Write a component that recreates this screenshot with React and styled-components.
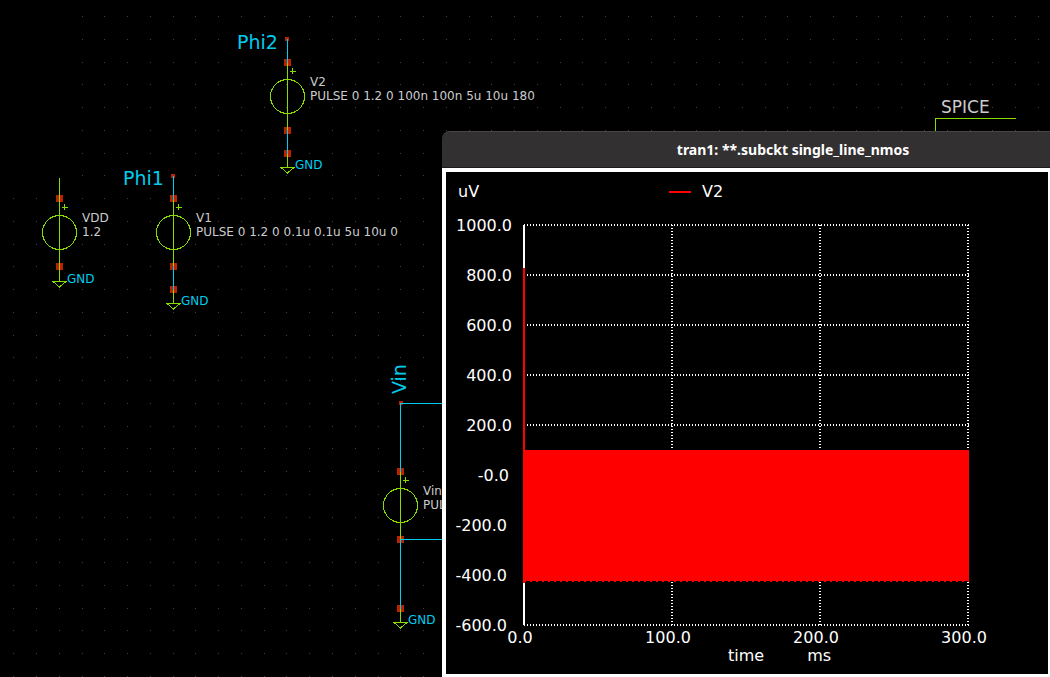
import React from "react";
import styled, { createGlobalStyle } from "styled-components";

const GlobalStyle = createGlobalStyle`
  body {
    margin: 0;
    background: #000;
    font-family: "DejaVu Sans", sans-serif;
  }
`;

const GREEN = "#88dd00";
const CYAN = "#00ccee";
const RED = "#bb2200";

const Desktop = styled.main`
  position: relative;
  min-height: 100vh;
  background: #000;
  overflow: hidden;
`;

const Schematic = styled.svg`
  position: absolute;
  inset: 0;
  width: 100%;
  height: 100%;
  shape-rendering: crispEdges;
`;

const Wire = styled.path`
  fill: none;
  stroke: ${(p) => p.$color};
  stroke-width: 1px;
`;

const Outline = styled.circle`
  fill: none;
  stroke: ${GREEN};
  stroke-width: 1px;
`;

const Label = styled.text`
  fill: ${(p) => p.$color || "#cccccc"};
  font-size: ${(p) => p.$size || 12}px;
`;

const PlotWindow = styled.section`
  position: absolute;
  top: 131px;
  left: 442px;
  right: 0;
  bottom: 0;
  display: flex;
  flex-direction: column;
`;

const TitleBar = styled.header`
  box-sizing: border-box;
  height: 37px;
  padding-left: 94px;
  display: flex;
  align-items: center;
  justify-content: center;
  background: #333031;
  border-top: 1px solid #474545;
  border-bottom: 1px solid #1c1b1b;
  border-radius: 8px 0 0 0;
`;

const Title = styled.h1`
  margin: 0;
  color: #fff;
  font: bold 14px/20px "Noto Sans", sans-serif;
  white-space: nowrap;
`;

const PlotFrame = styled.div`
  flex: 1;
  padding: 9px 0 0;
  border: solid #fff;
  border-width: 4px 2px 3px 4px;
  background: #000;
  color: #fff;
  font-size: 16px;
  line-height: 22px;
`;

const Legend = styled.div`
  display: flex;
  align-items: center;
  padding-left: 12px;
`;

const Unit = styled.span`
  width: 211px;
`;

const Swatch = styled.span`
  width: 22px;
  height: 2px;
  margin-right: 11px;
  background: #f00;
`;

const Chart = styled.svg`
  display: block;
  width: 600px;
  height: 444px;
  overflow: visible;
  shape-rendering: crispEdges;
`;

const ChartText = styled.text`
  fill: #fff;
  font-size: 16px;
  text-anchor: ${(p) => p.$anchor || "end"};
`;

const AxisCaption = styled.div`
  display: flex;
  gap: 43px;
  padding-left: 282px;
  line-height: 18px;
`;

const colAt = (i) => Math.floor(13.7 + 22.77 * i);
const rowAt = (j) => Math.floor(16.5 + 22.75 * j);

// The three leftmost columns of the grid start lower than the others.
function GridDots() {
  const dots = [];
  for (let j = 0; j < 30; j++) {
    for (let i = 0; i < 46; i++) {
      if (i < 3 && j < 8) continue;
      dots.push(`M${colAt(i)} ${rowAt(j)}h1v1h-1z`);
    }
  }
  return <path d={dots.join("")} fill="#3f3f3f" />;
}

function Pin({ x, y, small }) {
  const s = small ? 4 : 7;
  const o = small ? 2 : 3;
  return <rect x={x - o} y={y - o} width={s} height={s} fill={RED} />;
}

function Ground({ x, y }) {
  return (
    <g>
      <Wire $color={GREEN} d={`M${x - 6} ${y + 0.5}H${x + 7}L${x + 0.5} ${y + 6}Z`} />
      <Label $color={CYAN} x={x + 8} y={y + 2}>GND</Label>
    </g>
  );
}

// x, y: the top pin of a voltage source; its body is 69px tall
function Source({ x, y, name, value }) {
  return (
    <g>
      <Pin x={x} y={y} />
      <Pin x={x} y={y + 68} />
      <Wire $color={GREEN} d={`M${x + 0.5} ${y}V${y + 69}M${x + 3} ${y + 9.5}h6M${x + 5.5} ${y + 6}v6`} />
      <Outline cx={x + 0.5} cy={y + 34.5} r="17" />
      <Label x={x + 23} y={y + 24}>{name}</Label>
      <Label x={x + 23} y={y + 38}>{value}</Label>
    </g>
  );
}

const Y_TICKS = ["1000.0", "800.0", "600.0", "400.0", "200.0", "-0.0", "-200.0", "-400.0", "-600.0"];
const X_TICKS = ["0.0", "100.0", "200.0", "300.0"];

function tickEdge(label) {
  if (label === "-0.0") return 63;
  return label[0] === "-" ? 61 : 66;
}

function TransientChart() {
  const top = 22;
  const left = 78;
  return (
    <Chart viewBox="0 0 600 444" role="img" aria-label="V2 transient">
      <g stroke="#fff" strokeWidth="2" strokeDasharray="1 2">
        {Y_TICKS.map((t, i) => (
          <path key={t} d={`M${left} ${top + i * 50}H${left + 445}`} />
        ))}
        {[1, 2, 3].map((i) => (
          <path key={i} d={`M${left + i * 148} ${top}V${top + 400}`} />
        ))}
      </g>
      <rect x={left - 1} y={top} width="2" height="400" fill="#fff" />
      <rect x={left - 1} y={top + 43} width="2" height="315" fill="#f00" />
      <rect x={left - 1} y={top + 225} width="446" height="131" fill="#f00" />
      <path d={`M${left} ${top + 356.5}H${left + 445}`} stroke="#f00" strokeDasharray="2 4" />
      {Y_TICKS.map((t, i) => (
        <ChartText key={t} x={tickEdge(t)} y={top + 6 + i * 50}>{t}</ChartText>
      ))}
      {X_TICKS.map((t, i) => (
        <ChartText key={t} $anchor="middle" x={left - 4 + i * 148} y={top + 418}>{t}</ChartText>
      ))}
    </Chart>
  );
}

export default function App() {
  return (
    <>
      <GlobalStyle />
      <Desktop>
        <Schematic>
          <GridDots />

          <Source x={59} y={198} name="VDD" value="1.2" />
          <Wire $color={GREEN} d="M59.5 178V198M59.5 266V282" />
          <Ground x={59} y={281} />

          <Label $color={CYAN} $size={19} x="123" y="185">Phi1</Label>
          <Source x={173} y={198} name="V1" value="PULSE 0 1.2 0 0.1u 0.1u 5u 10u 0" />
          <Pin x={173} y={176} small />
          <Pin x={173} y={289} />
          <Wire $color={CYAN} d="M173.5 176V200M173.5 266V290" />
          <Wire $color={GREEN} d="M173.5 290V304" />
          <Ground x={173} y={303} />

          <Label $color={CYAN} $size={19} x="237" y="49">Phi2</Label>
          <Source x={287} y={62} name="V2" value="PULSE 0 1.2 0 100n 100n 5u 10u 180" />
          <Pin x={287} y={39} small />
          <Pin x={287} y={153} />
          <Wire $color={CYAN} d="M287.5 39V63M287.5 130V154" />
          <Wire $color={GREEN} d="M287.5 154V167" />
          <Ground x={287} y={167} />

          <Label $color={CYAN} $size={19} transform="translate(406 394) rotate(-90)">Vin</Label>
          <Source x={400} y={471} name="Vin" value="PULSE" />
          <Pin x={401} y={403} small />
          <Pin x={400} y={608} />
          <Wire $color={CYAN} d="M442 403.5H400.5V472M442 539.5H400.5V609" />
          <Wire $color={GREEN} d="M400.5 609V622" />
          <Ground x={400} y={622} />

          <Label $size={17} x="941" y="113">SPICE</Label>
          <Wire $color={GREEN} d="M1016 118.5H935.5V132" />
        </Schematic>

        <PlotWindow>
          <TitleBar>
            <Title>tran1: **.subckt single_line_nmos</Title>
          </TitleBar>
          <PlotFrame>
            <Legend>
              <Unit>uV</Unit>
              <Swatch />
              <span>V2</span>
            </Legend>
            <TransientChart />
            <AxisCaption>
              <span>time</span>
              <span>ms</span>
            </AxisCaption>
          </PlotFrame>
        </PlotWindow>
      </Desktop>
    </>
  );
}
